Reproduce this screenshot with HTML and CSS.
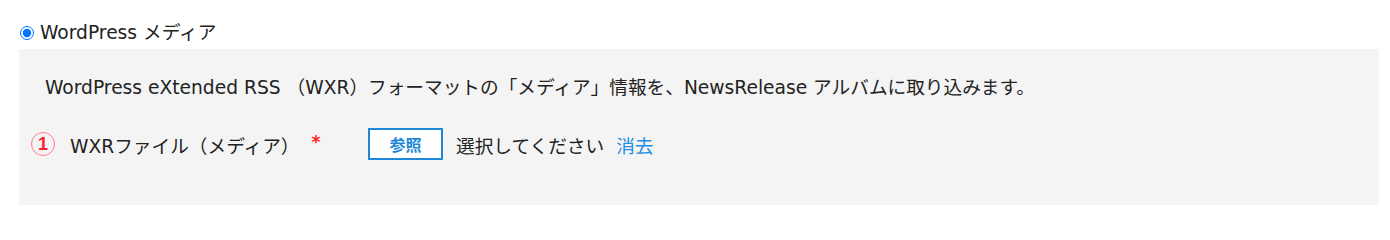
FILE: index.html
```html
<!DOCTYPE html>
<html lang="ja">
<head>
<meta charset="utf-8">
<link rel="stylesheet" href="styles.css">
</head>
<body>
<div class="page">
  <label class="option">
    <input type="radio" class="radio" name="src" checked>
    <span class="option-text">WordPress メディア</span>
  </label>
  <div class="panel">
    <p class="desc">WordPress eXtended RSS （WXR）フォーマットの「メディア」情報を、NewsRelease アルバムに取り込みます。</p>
    <div class="field">
      <div class="field-label">
        <span class="step">1</span>
        <span class="label-text">WXRファイル（メディア）</span>
        <span class="req">*</span>
      </div>
      <div class="control">
        <button class="browse" type="button">参照</button>
        <span class="placeholder">選択してください</span>
        <a class="clear" href="#">消去</a>
      </div>
    </div>
  </div>
</div>
</body>
</html>
```

FILE: styles.css
```css
html, body {
  margin: 0;
  padding: 0;
  background: #ffffff;
}
body {
  font-family: "DejaVu Sans", "Noto Sans CJK JP", sans-serif;
  font-size: 14pt;
  color: #222222;
}
.page {
  padding: 20px 11px 0 19px;
}
.option {
  display: flex;
  align-items: center;
  height: 26px;
  gap: 6px;
}
.radio {
  width: 14px;
  height: 14px;
  margin: 0 0 0 1px;
  accent-color: #0075ff;
}
.option-text {
  line-height: 26px;
}
.panel {
  margin-top: 3px;
  background: #f4f4f4;
  height: 156px;
  box-sizing: border-box;
  padding: 26px 26px 0 26px;
}
.desc {
  margin: 0;
  line-height: 26px;
}
.field {
  display: flex;
  align-items: center;
  margin-top: 26px;
  height: 34px;
}
.field-label {
  display: flex;
  align-items: center;
  width: 337px;
  margin-left: -14px;
}
.step {
  width: 22px;
  height: 22px;
  border: 1.5px solid #ff7a86;
  border-radius: 50%;
  color: #ff1f33;
  font-weight: bold;
  font-size: 18px;
  line-height: 22px;
  text-align: center;
  font-family: "Liberation Sans", sans-serif;
}
.label-text {
  margin-left: 15px;
}
.req {
  margin-left: 12px;
  color: #ff2020;
  font-size: 17px;
  font-weight: bold;
  position: relative;
  top: -2px;
}
.control {
  display: flex;
  align-items: center;
}
.browse {
  width: 75px;
  height: 32px;
  box-sizing: border-box;
  border: 2px solid #1e88d8;
  background: #ffffff;
  color: #1e88d8;
  font-family: "Noto Sans CJK JP", sans-serif;
  font-weight: bold;
  font-size: 16px;
  padding: 0;
  margin-right: 13px;
}
.clear {
  margin-left: 12px;
  color: #1e8ee0;
  text-decoration: none;
}
```
